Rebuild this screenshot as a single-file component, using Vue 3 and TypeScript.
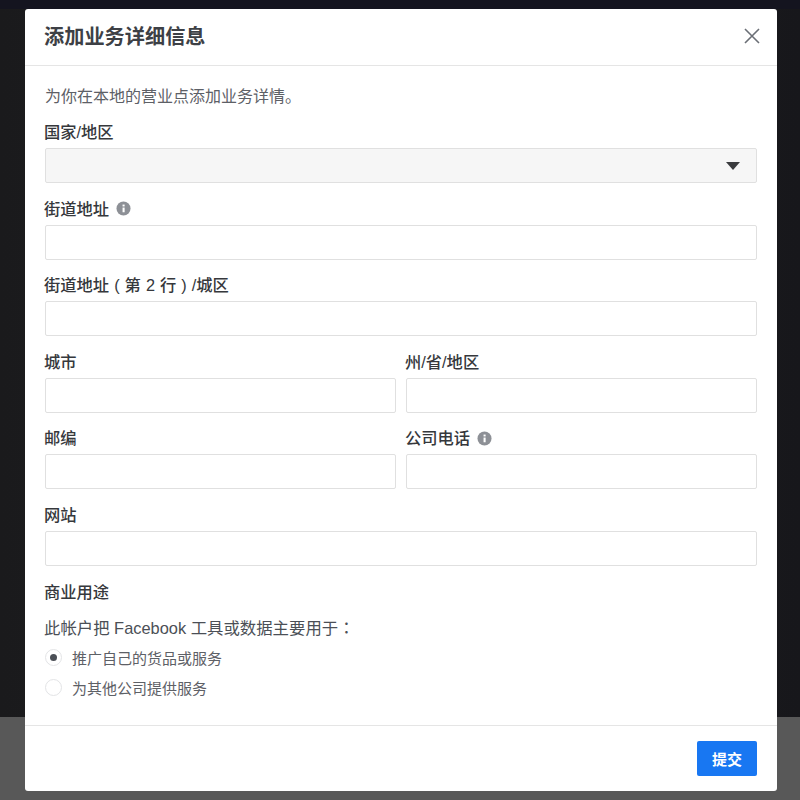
<script setup lang="ts">
interface Field { label: string; info?: boolean; half?: boolean }
const fields: Field[] = [
  { label: '街道地址', info: true },
  { label: '街道地址 ( 第 2 行 ) /城区' },
  { label: '城市', half: true },
  { label: '州/省/地区', half: true },
  { label: '邮编', half: true },
  { label: '公司电话', info: true, half: true },
  { label: '网站' },
]
</script>

<template>
  <div class="page">
    <div class="backdrop">
      <div class="top-strip"></div>
      <div class="dark"></div>
      <div class="grey"></div>
    </div>
    <section class="modal">
      <header class="head">
        <h1>添加业务详细信息</h1>
        <svg class="close" viewBox="0 0 16 16" width="16" height="16">
          <path d="M1 1 15 15M15 1 1 15" stroke="#6b6f76" stroke-width="1.6" fill="none" />
        </svg>
      </header>
      <div class="body">
        <p class="intro">为你在本地的营业点添加业务详情。</p>
        <div class="grid">
          <div class="field wide">
            <label>国家/地区</label>
            <div class="select">
              <svg viewBox="0 0 14 8" width="14" height="8"><path d="M0 0h14L7 8z" fill="#3a3b3e" /></svg>
            </div>
          </div>
          <div v-for="f in fields" :key="f.label" class="field" :class="{ wide: !f.half }">
            <label>
              <span>{{ f.label }}</span>
              <svg v-if="f.info" class="info" viewBox="0 0 16 16" width="15" height="15">
                <circle cx="8" cy="8" r="7.5" fill="#8d9096" />
                <rect x="7" y="7" width="2.2" height="5" fill="#fff" />
                <rect x="7" y="3.8" width="2.2" height="2" fill="#fff" />
              </svg>
            </label>
            <div class="input"></div>
          </div>
        </div>
        <h2>商业用途</h2>
        <p class="usage">此帐户把 Facebook 工具或数据主要用于<span class="colon">：</span></p>
        <div class="radio first"><span class="dot on"></span>推广自己的货品或服务</div>
        <div class="radio"><span class="dot"></span>为其他公司提供服务</div>
      </div>
      <footer class="foot">
        <button type="button">提交</button>
      </footer>
    </section>
  </div>
</template>

<style>
html, body { margin: 0; padding: 0; }
</style>

<style scoped>
.page {
  position: relative;
  width: 800px;
  height: 800px;
  overflow: hidden;
  font-family: "Liberation Sans", "Noto Sans CJK SC", sans-serif;
  color: #4b4f56;
}
.backdrop { height: 800px; display: flex; flex-direction: column; }
.top-strip { height: 9px; background: #14141f; }
.dark { height: 708px; background: linear-gradient(90deg, #1a1a1c, #202022 50%, #17171b); }
.grey { flex: 1; background: #585858; }
.modal {
  position: absolute;
  left: 25px;
  top: 9px;
  width: 752px;
  height: 782px;
  background: #fff;
  border-radius: 3px;
  display: flex;
  flex-direction: column;
}
.head {
  height: 57px;
  box-sizing: border-box;
  flex: none;
  border-bottom: 1px solid #e5e5e5;
  padding: 0 17px 3px 19px;
  display: flex;
  align-items: center;
  justify-content: space-between;
}
h1 { margin: 0; font-size: 20.2px; font-weight: 700; color: #3d4045; }
.body { flex: 1; padding: 19px 20px 0 20px; }
.intro { margin: 0; font-size: 16px; line-height: 24px; color: #5d6066; }
.grid { display: grid; grid-template-columns: 1fr 1fr; column-gap: 10px; row-gap: 0; margin-top: 2px; }
.wide { grid-column: 1 / -1; }
.field { height: 76.6px; }
label {
  display: flex;
  align-items: center;
  gap: 7px;
  height: 24px;
  padding-top: 8px;
  margin-bottom: 5px;
  margin-left: -1px;
  font-size: 16.3px;
  font-weight: 500;
  word-spacing: 0.5px;
  color: #36383c;
}
.info { margin-top: 2px; }
.input, .select {
  box-sizing: border-box;
  height: 35px;
  border: 1px solid #e0e0e0;
  border-radius: 2px;
  background: #fff;
}
.select {
  background: #f6f6f6;
  display: flex;
  align-items: center;
  justify-content: flex-end;
  padding-right: 16px;
}
h2 {
  margin: 9px 0 0 -1px;
  font-size: 16.3px;
  line-height: 24px;
  font-weight: 500;
  color: #36383c;
}
.usage { margin: 11px 0 0 -1px; font-size: 16.4px; line-height: 24px; color: #4b4f56; }
.colon { font-family: "Noto Sans CJK TC", sans-serif; }
.radio {
  height: 30px;
  display: flex;
  align-items: center;
  gap: 10px;
  font-size: 15px;
  color: #5d6066;
}
.first { margin-top: 3px; }
.dot {
  box-sizing: border-box;
  width: 17px;
  height: 17px;
  border-radius: 50%;
  border: 1px solid #e3e4e6;
  display: flex;
  align-items: center;
  justify-content: center;
}
.dot.on::after {
  content: "";
  width: 7px;
  height: 7px;
  border-radius: 50%;
  background: #4b4f56;
}
.foot {
  flex: none;
  height: 66px;
  box-sizing: border-box;
  border-top: 1px solid #e5e5e5;
  display: flex;
  justify-content: flex-end;
  align-items: flex-start;
  padding: 15px 20px 0 0;
}
button {
  width: 60px;
  height: 35px;
  border: none;
  border-radius: 2px;
  background: #1877f2;
  color: #fff;
  font: 700 15px "Liberation Sans", "Noto Sans CJK SC", sans-serif;
}
</style>
